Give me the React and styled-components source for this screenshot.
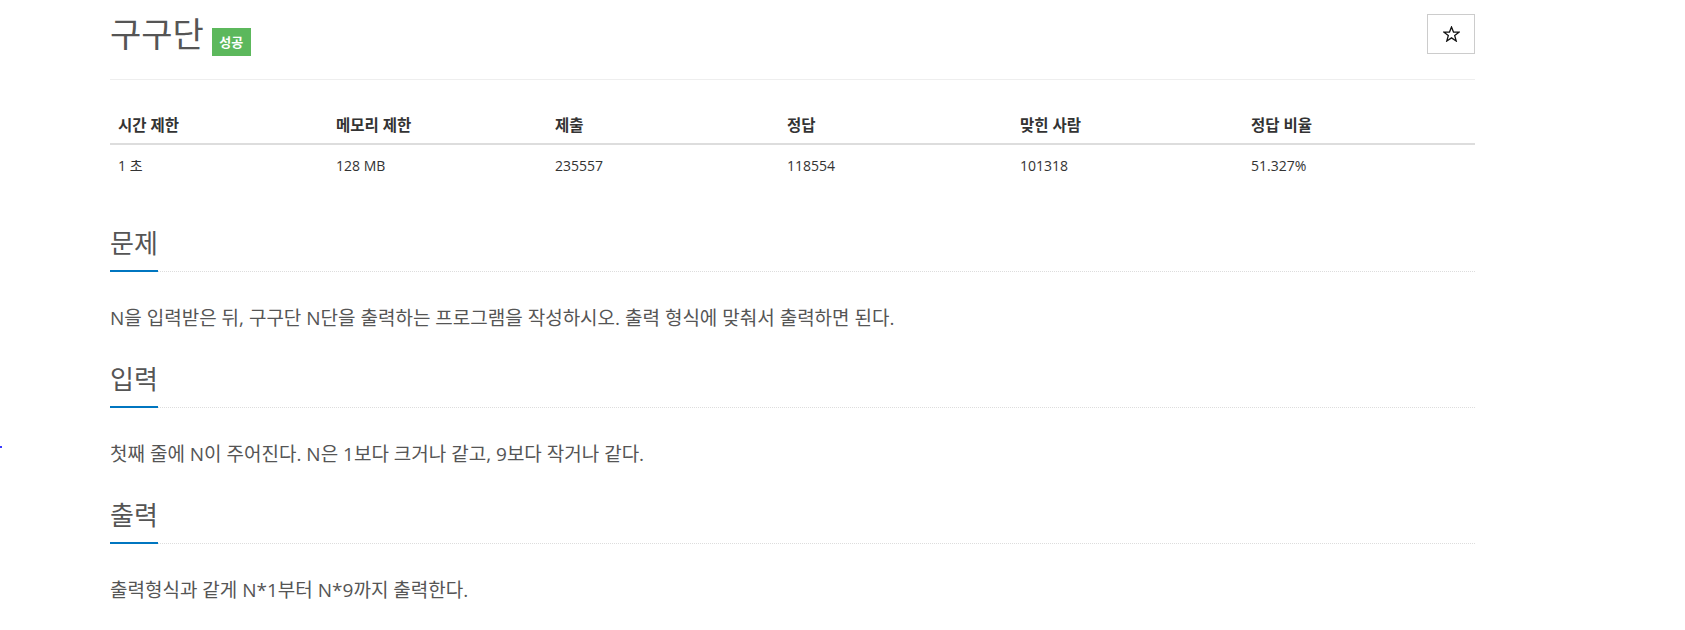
import React from "react";
import styled, { createGlobalStyle } from "styled-components";

const GlobalStyle = createGlobalStyle`
    body {
        margin: 0;
        background: #fff;
        font-family: "Open Sans", "Noto Sans CJK KR", sans-serif;
        color: #555;
    }
`

const stats = [
    { label: '시간 제한', value: '1 초', width: 218 },
    { label: '메모리 제한', value: '128 MB', width: 219 },
    { label: '제출', value: '235557', width: 232 },
    { label: '정답', value: '118554', width: 233 },
    { label: '맞힌 사람', value: '101318', width: 231 },
    { label: '정답 비율', value: '51.327%', width: 232 },
]

const sections = [
    { title: '문제', body: 'N을 입력받은 뒤, 구구단 N단을 출력하는 프로그램을 작성하시오. 출력 형식에 맞춰서 출력하면 된다.' },
    { title: '입력', body: '첫째 줄에 N이 주어진다. N은 1보다 크거나 같고, 9보다 작거나 같다.' },
    { title: '출력', body: '출력형식과 같게 N*1부터 N*9까지 출력한다.' },
]

const App = () => {
    return (
        <Page>
            <GlobalStyle />
            <Marker />
            <Container>
                <Header />
                <StatsTable />
                {sections.map((s) => (
                    <Section key={s.title} title={s.title} body={s.body} />
                ))}
            </Container>
        </Page>
    )
}

const Header = () => {
    return (
        <HeaderWrapper>
            <TitleGroup>
                <Title>구구단</Title>
                <Badge>성공</Badge>
            </TitleGroup>
            <StarButton>
                <svg width="17" height="16" viewBox="0 0 17 16">
                    <polygon
                        points="8.5,1 10.5,6 16,6.2 11.7,9.6 13.2,15 8.5,11.9 3.8,15 5.3,9.6 1,6.2 6.5,6"
                        fill="none"
                        stroke="#111"
                        strokeWidth="1.3"
                        strokeLinejoin="miter"
                    />
                </svg>
            </StarButton>
        </HeaderWrapper>
    )
}

const StatsTable = () => {
    return (
        <Table>
            <thead>
                <tr>
                    {stats.map((s) => (
                        <Th key={s.label} $width={s.width}>{s.label}</Th>
                    ))}
                </tr>
            </thead>
            <tbody>
                <tr>
                    {stats.map((s) => (
                        <Td key={s.label}>{s.value}</Td>
                    ))}
                </tr>
            </tbody>
        </Table>
    )
}

const Section = ({ title, body }) => {
    return (
        <SectionWrapper>
            <Headline>
                <SectionTitle>{title}</SectionTitle>
            </Headline>
            <Description>{body}</Description>
        </SectionWrapper>
    )
}

const Page = styled.div`
    position: relative;
    width: 100%;
    min-height: 630px;
`

const Marker = styled.div`
    position: absolute;
    left: 0;
    top: 446px;
    width: 2px;
    height: 2px;
    background: #3a3aff;
`

const Container = styled.div`
    width: 1365px;
    margin-left: 110px;
`

const HeaderWrapper = styled.div`
    display: flex;
    align-items: center;
    justify-content: space-between;
    padding: 14px 0 25px;
    border-bottom: 1px solid #eee;
`

const TitleGroup = styled.div`
    display: flex;
    align-items: flex-end;
    gap: 8px;
`

const Title = styled.h1`
    margin: 0;
    font-size: 34px;
    line-height: 40px;
    font-weight: 400;
    color: #555;
`

const Badge = styled.span`
    margin-bottom: -2px;
    height: 28px;
    line-height: 28px;
    padding: 0 7.5px;
    background: #5cb85c;
    color: #fff;
    font-size: 13px;
    font-weight: 700;
`

const StarButton = styled.button`
    width: 48px;
    height: 40px;
    display: flex;
    align-items: center;
    justify-content: center;
    background: #fff;
    border: 1px solid #ccc;
    padding: 0;
`

const Table = styled.table`
    width: 100%;
    margin-top: 27px;
    border-collapse: collapse;
    table-layout: fixed;
    color: #333;
`

const Th = styled.th`
    box-sizing: border-box;
    width: ${(p) => p.$width}px;
    padding: 8px;
    font-size: 15.5px;
    line-height: 20px;
    text-align: left;
    font-weight: 700;
    border-bottom: 2px solid #ddd;
`

const Td = styled.td`
    padding: 11px 8px 8px;
    font-size: 14px;
    line-height: 20px;
    text-align: left;
`

const SectionWrapper = styled.section`
    margin-top: 42px;

    & + & {
        margin-top: 29px;
    }
`

const Headline = styled.div`
    border-bottom: 1px dotted #ddd;
`

const SectionTitle = styled.h2`
    display: inline-block;
    margin: 0 0 -1px;
    padding-bottom: 10px;
    font-size: 26px;
    line-height: 34px;
    font-weight: 400;
    color: #555;
    border-bottom: 2px solid #0076c0;
`

const Description = styled.p`
    margin: 31px 0 0;
    font-size: 19px;
    line-height: 30px;
    color: #555;
`

export default App;
